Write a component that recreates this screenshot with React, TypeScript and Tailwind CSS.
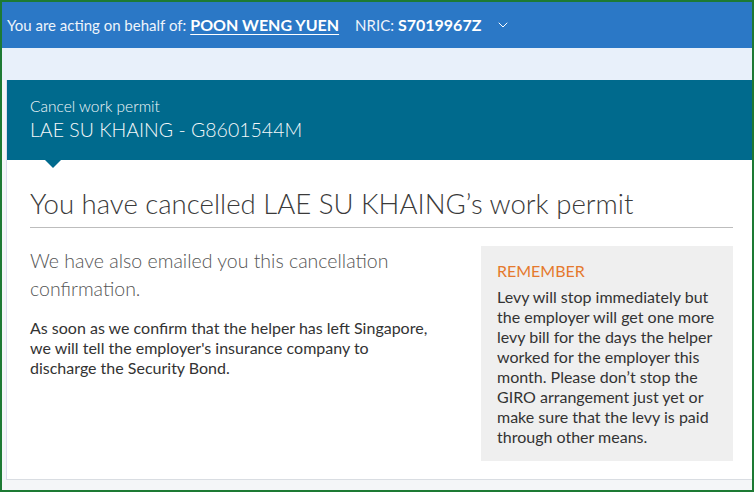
import { ChevronDown } from "lucide-react";

export default function App() {
  return (
    <div
      className="w-[754px] h-[492px] overflow-hidden border-2 border-[#1d7a34] bg-[#f3f6f9] flex flex-col"
      style={{ fontFamily: "Lato, 'Open Sans', sans-serif" }}
    >
      {/* acting-on-behalf bar */}
      <div className="h-[46px] shrink-0 bg-[#2b78c6] flex items-center pl-[5px] text-[15px] text-[#eef4fb]">
        <span>You are acting on behalf of:</span>
        <span className="ml-[4px] text-[16px] font-bold underline underline-offset-[3px] text-white">POON WENG YUEN</span>
        <span className="ml-[16px]">NRIC:</span>
        <span className="ml-[4px] text-[16px] font-bold text-white">S7019967Z</span>
        <ChevronDown className="ml-[14px] w-[16px] h-[16px] text-white" strokeWidth={1.5} />
      </div>

      <div className="h-[32px] shrink-0 bg-[#e8f0fa]" />

      <div className="ml-[4px] flex-1 flex flex-col bg-white border-l border-[#dcdcee] border-b border-b-[#d9dde2]">
        <div className="relative h-[80px] shrink-0 bg-[#006a8d] text-[#f4f8fa] pl-[23px] pt-[16px]">
          <div className="text-[15.5px] leading-[20px] font-light">Cancel work permit</div>
          <div className="text-[19.5px] leading-[26px] mt-[1px] font-light">LAE SU KHAING - G8601544M</div>
          <div className="absolute left-[38px] -bottom-[8px] w-0 h-0 border-l-[8px] border-r-[8px] border-t-[8px] border-l-transparent border-r-transparent border-t-[#006a8d]" />
        </div>

        <div className="pl-[23px] pr-[19px] pt-[27px]">
          <h1 className="text-[27.6px] leading-[34px] font-light text-[#3a3a3a] pb-[6px] border-b border-[#bdbdbd]">
            You have cancelled LAE SU KHAING’s work permit
          </h1>

          <div className="flex mt-[18px] justify-between">
            <div className="w-[405px] pt-[1px]">
              <p className="text-[19.5px] leading-[28px] font-light text-[#555]">
                We have also emailed you this cancellation confirmation.
              </p>
              <p className="mt-[15px] text-[16px] leading-[20px] text-[#333]">
                As soon as we confirm that the helper has left Singapore, we will tell the employer's insurance company to discharge the Security Bond.
              </p>
            </div>
            <div className="w-[252px] shrink-0 bg-[#efefef] pl-[16px] pr-[16px] pt-[15px] pb-[14px] text-[16px] leading-[20px] text-[#333]">
              <div className="text-[#e5792d]">REMEMBER</div>
              <p className="mt-[6px]">
                Levy will stop immediately but the employer will get one more levy bill for the days the helper worked for the employer this month. Please don’t stop the GIRO arrangement just yet or make sure that the levy is paid through other means.
              </p>
            </div>
          </div>
        </div>
      </div>

      <div className="h-[10px] shrink-0 bg-[#f4f6f8]" />
    </div>
  );
}
